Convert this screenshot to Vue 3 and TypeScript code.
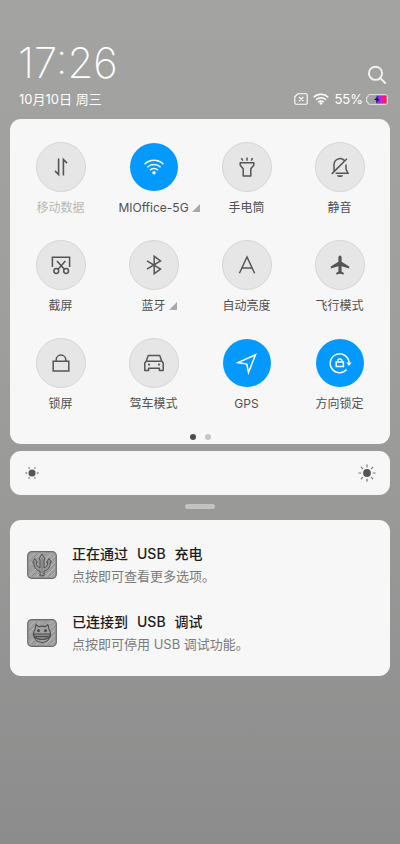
<script setup lang="ts">
import { ref } from 'vue'

type IconName =
  | 'data' | 'wifi' | 'torch' | 'mute'
  | 'shot' | 'bluetooth' | 'auto' | 'plane'
  | 'lock' | 'car' | 'gps' | 'rotate'

interface Tile {
  icon: IconName
  label: string
  on?: boolean
  dim?: boolean
  more?: boolean
}

const tiles = ref<Tile[]>([
  { icon: 'data', label: '移动数据', dim: true },
  { icon: 'wifi', label: 'MIOffice-5G', on: true, more: true },
  { icon: 'torch', label: '手电筒' },
  { icon: 'mute', label: '静音' },
  { icon: 'shot', label: '截屏' },
  { icon: 'bluetooth', label: '蓝牙', more: true },
  { icon: 'auto', label: '自动亮度' },
  { icon: 'plane', label: '飞行模式' },
  { icon: 'lock', label: '锁屏' },
  { icon: 'car', label: '驾车模式' },
  { icon: 'gps', label: 'GPS', on: true },
  { icon: 'rotate', label: '方向锁定', on: true },
])

const brightness = ref(0)

const notices = [
  { kind: 'usb', title: ['正在通过', 'USB', '充电'], text: '点按即可查看更多选项。' },
  { kind: 'debug', title: ['已连接到', 'USB', '调试'], text: '点按即可停用 USB 调试功能。' },
]

function toggle(tile: Tile) {
  tile.on = !tile.on
}
</script>

<template>
  <main class="shade">
    <header class="top">
      <div class="when">
        <time class="clock">17:26</time>
        <span class="date">10月10日 周三</span>
      </div>
      <div class="side">
        <button class="search" type="button" aria-label="搜索">
          <svg width="20" height="20" viewBox="0 0 20 20" fill="none" stroke="#f2f2f2" stroke-width="1.9" stroke-linecap="round">
            <circle cx="8.5" cy="8.3" r="6.6" />
            <path d="M13.3 13.1 18.200 18" />
          </svg>
        </button>
        <div class="status">
          <svg width="14" height="12" viewBox="0 0 14 12" fill="none" stroke="#fff" stroke-width="1.1">
            <path d="M3.8.8H12a1.2 1.2 0 0 1 1.2 1.2v8a1.2 1.2 0 0 1-1.2 1.2H2A1.2 1.2 0 0 1 .8 10V3.8zM5 4l4.4 4.2M9.4 4 5 8.2" />
          </svg>
          <svg width="16" height="12" viewBox="0 0 16 12" fill="none" stroke="#fff" stroke-width="1.5">
            <path d="M.7 4.2a10.6 10.6 0 0 1 14.6 0M3 6.7a7.4 7.4 0 0 1 10 0M5.3 9.1a4.1 4.1 0 0 1 5.4 0" />
            <path d="M6.2 10 8 11.9 9.8 10a2.8 2.8 0 0 0-3.6 0z" fill="#fff" stroke="none" />
          </svg>
          <span>55%</span>
          <svg class="battery" width="22" height="11" viewBox="0 0 22 11">
            <defs>
              <linearGradient id="charge" x1="0" x2="1" y1="0" y2="0">
                <stop offset="0" stop-color="#5a30ff" />
                <stop offset=".4" stop-color="#b02be0" />
                <stop offset=".8" stop-color="#ff1765" />
              </linearGradient>
            </defs>
            <path d="M2 3V2A1.4 1.4 0 0 1 3.4.6h16.2A1.8 1.8 0 0 1 21.4 2.400v6.200a1.800 1.800 0 0 1-1.800 1.800H3.400A1.400 1.400 0 0 1 2 9V8H.6V3z" fill="none" stroke="#e4e4e4" stroke-width="1" />
            <path d="M10.500 1.600h10v7.800h-10z" fill="url(#charge)" />
            <path d="m12 2-4 4h2.500l-.5 3.200 3.600-4.300h-2.200z" fill="#191540" />
          </svg>
        </div>
      </div>
    </header>

    <section class="card quick">
      <div class="grid">
        <button
          v-for="tile in tiles"
          :key="tile.icon"
          type="button"
          class="tile"
          :class="{ on: tile.on, dim: tile.dim }"
          @click="toggle(tile)"
        >
          <span class="disc">
            <svg width="24" height="24" viewBox="0 0 24 24" fill="none" stroke="currentColor" stroke-width="1.5" aria-hidden="true">
              <path v-if="tile.icon === 'data'" d="M9.600 3.500v16L6 15.900M14.400 20.500v-16l3.600 3.600" stroke-width="1.600" />
              <g v-else-if="tile.icon === 'wifi'">
                <path d="M2.600 9.200a13.400 13.400 0 0 1 18.800 0M5.400 12.200a9.400 9.400 0 0 1 13.200 0M8 15.100a5.700 5.700 0 0 1 8 0" />
                <circle cx="12" cy="17.800" r="1.700" fill="currentColor" stroke="none" />
              </g>
              <g v-else-if="tile.icon === 'torch'" stroke-linejoin="round">
                <path d="M5.200 7.800h13.600v2.400L15.800 13.800v7.200H8.200v-7.200L5.200 10.200zM12 2.500v3.200M6.400 3.200l1.400 2.500M17.600 3.200l-1.400 2.500" />
              </g>
              <g v-else-if="tile.icon === 'mute'">
                <path d="M16.400 5.600A6 6 0 0 0 6 9.700v6.100M18 9.500V14l2 4.200H7.600M3.800 18.900 18.900 3.800" />
                <path d="M9 20.200h6a3 1.800 0 0 1-6 0z" fill="currentColor" stroke="none" />
              </g>
              <g v-else-if="tile.icon === 'shot'">
                <path d="M3.400 14V4.200h17.200V14M8 8l7.600 8.600M16.400 8l-7.600 8.600" />
                <circle cx="7.300" cy="18" r="2.400" />
                <circle cx="17.100" cy="18" r="2.400" />
              </g>
              <path v-else-if="tile.icon === 'bluetooth'" d="m5 7.900 13.500 8.100-6.300 4.700V3.300L18.500 8 5 16.100" />
              <path v-else-if="tile.icon === 'auto'" d="M4.400 20.200 12 4l7.600 16.200M7 15h10" />
              <path
                v-else-if="tile.icon === 'plane'"
                d="M12 2.600c1.200 0 1.600 1 1.600 2.200v4L21.200 13.600v2l-7.600-2.400v5.200l2.200 1.500v1.500L12 20.800l-3.800.600v-1.500l2.200-1.500v-5.200L2.800 15.600v-2l7.600-4.800v-4c0-1.200.400-2.200 1.600-2.200z"
                fill="currentColor"
                stroke="none"
              />
              <path v-else-if="tile.icon === 'lock'" d="M4.200 10.200h15.600v9.800H4.200zM7.200 10.200V8.800a4.800 4.800 0 0 1 9.600 0v1.400" />
              <g v-else-if="tile.icon === 'car'" stroke-linejoin="round">
                <path d="M4.200 10.200 6.300 4.500h11.400l2.100 5.700zL2.800 12v7.600h3.800v-2.400h10.800v2.400h3.800V12l-1.400-1.800" />
                <circle cx="7" cy="13.600" r="1.100" fill="currentColor" stroke="none" />
                <circle cx="17" cy="13.600" r="1.100" fill="currentColor" stroke="none" />
              </g>
              <path v-else-if="tile.icon === 'gps'" d="M20.500 3.800 3 11.600l8.800 1.500 1.700 8.400z" />
              <g v-else>
                <path d="M18.600 18.600A9.400 9.400 0 1 1 21 11.500" />
                <path d="M18.400 11.400h5.200l-2.600 3.600z" fill="currentColor" stroke="none" />
                <path d="M8.200 11h7.200v4.400H8.200zM9.700 11V10a2.100 2.100 0 0 1 4.200 0v1" />
              </g>
            </svg>
          </span>
          <span class="name">
            {{ tile.label }}
            <svg v-if="tile.more" class="more" width="8" height="8" viewBox="0 0 8 8" aria-hidden="true"><path d="M8 0v8H0z" fill="#a9a9a9" /></svg>
          </span>
        </button>
      </div>
      <div class="pages"><i class="current"></i><i></i></div>
    </section>

    <label class="card bright">
      <svg width="14" height="14" viewBox="0 0 14 14" fill="none" stroke="#777" stroke-width="1.300" stroke-linecap="round" aria-hidden="true">
        <circle cx="7" cy="7" r="3.500" fill="#555" stroke="none" />
        <path d="M1 7h.6M12.400 7h.6M4 1.800l.3.500M10 1.800l-.3.500M4 12.200l.3-.5M10 12.200l-.3-.5" />
      </svg>
      <input v-model.number="brightness" type="range" min="0" max="100" aria-label="亮度" />
      <svg width="18" height="18" viewBox="0 0 18 18" fill="none" stroke="#777" stroke-width="1.200" stroke-linecap="round" aria-hidden="true">
        <circle cx="9" cy="9" r="3.900" fill="#555" stroke="none" />
        <path d="M9 .8v2M9 15.200v2M.8 9h2M15.200 9h2M3.200 3.200l1.400 1.400M13.400 13.400l1.400 1.400M3.200 14.800l1.400-1.400M13.400 4.600l1.400-1.400" />
      </svg>
    </label>

    <div class="handle"></div>

    <section class="card notices">
      <article v-for="item in notices" :key="item.kind" class="notice">
        <svg width="30" height="28" viewBox="0 0 30 28" fill="none" aria-hidden="true">
          <rect x=".7" y=".7" width="28.600" height="26.600" rx="4" fill="#a0a0a0" stroke="#6a6a6a" stroke-width="1.200" />
          <path
            d="m2 8 6-6M2 14 13 3M3 18l5-5M18 9l7-7M22 11l6-6M23 16l5-5M2 25l7-7M9 26l5-5M18 26l10-10M23 26l5-5"
            stroke="#b8b8b8"
            stroke-width="1"
          />
          <path
            d="m3 11 7-8M2 20l7-9M5 25l8-7M16 6l4-4M20 14l8-7M20 21l8-8M14 26l6-6M21 26l6-5"
            stroke="#8a8a8a"
            stroke-width=".8"
          />
          <g v-if="item.kind === 'usb'" stroke="#505050" stroke-width="1" stroke-linejoin="round">
            <path d="M15 3 11.800 8l1.200.6V17C10.300 16 9.200 14 9.200 11.400h1.200L8 7.500 5.600 11.400h1.200c0 5 2.200 7.800 6.200 8.600v4.800h4V20c4-.8 6.200-3.600 6.200-8.600h1.200L22 7.500l-2.400 3.900h1.200c0 2.600-1.100 4.600-3.800 5.600V8.600l1.200-.6z" fill="#989898" />
            <path d="M15 7v15" stroke="#777" stroke-width=".8" />
          </g>
          <g v-else stroke="#4c4c4c" stroke-width="1.100" stroke-linejoin="round">
            <path d="M8 10.500 9 5.500l2.600 2.200Q15 6.500 18.400 7.700L21 5.500l1 5c3.500 5 .200 13-7 13S4.500 15.500 8 10.500z" fill="#a0a0a0" />
            <path d="M6.800 15h16.400c.2 3.500-3.200 5.500-8.200 5.500s-8.400-2-8.200-5.500z" fill="#8a8a8a" />
            <path d="M8.500 17.600h13" />
            <circle cx="11.500" cy="11.800" r=".9" fill="#484848" />
            <circle cx="18.500" cy="11.800" r=".9" fill="#484848" />
          </g>
        </svg>
        <div>
          <h2><span v-for="part in item.title" :key="part">{{ part }}</span></h2>
          <p>{{ item.text }}</p>
        </div>
      </article>
    </section>
  </main>
</template>

<style>
body {
  margin: 0;
}
</style>

<style scoped>
.shade {
  box-sizing: border-box;
  min-height: 100vh;
  padding: 36px 10px 20px;
  display: flex;
  flex-direction: column;
  background: linear-gradient(180deg, #a3a3a2 0%, #9f9f9d 35%, #989897 65%, #8c8c8c 100%);
  font-family: Inter, "Noto Sans CJK SC", sans-serif;
  color: #505050;
}

button {
  padding: 0;
  border: 0;
  background: none;
  font: inherit;
  color: inherit;
}

svg {
  display: block;
  flex: none;
}

.top {
  display: flex;
  justify-content: space-between;
  align-items: flex-end;
  padding: 0 2px 11px 8px;
  color: #fff;
}

.when,
.side {
  display: flex;
  flex-direction: column;
}

.clock {
  font-weight: 200;
  font-size: 42px;
  line-height: 54px;
}

.date {
  padding-left: 1px;
  font-size: 13px;
  line-height: 18px;
}

.side {
  align-items: flex-end;
  gap: 5px;
}

.search {
  margin-right: 1px;
}

.status {
  display: flex;
  align-items: center;
  gap: 5px;
  font-size: 13px;
  line-height: 18px;
}

.battery {
  margin-left: -2px;
}

.card {
  border-radius: 11px;
  background: #f7f7f7;
}

.quick {
  padding: 23px 4px 4px;
}

.grid {
  display: grid;
  grid-template-columns: repeat(4, 1fr);
  row-gap: 23px;
}

.tile {
  display: flex;
  flex-direction: column;
  align-items: center;
  gap: 7px;
}

.disc {
  box-sizing: border-box;
  width: 50px;
  height: 50px;
  display: grid;
  place-items: center;
  border: 1px solid #d6d6d6;
  border-radius: 50%;
  background: #e6e6e6;
  color: #555;
}

.on .disc {
  border-color: transparent;
  background: #0499ff;
  background-clip: padding-box;
  color: #fff;
}

.name {
  position: relative;
  font-size: 12px;
  line-height: 18px;
  white-space: nowrap;
}

.more {
  position: absolute;
  left: calc(100% + 3px);
  top: 5px;
}

.dim .name {
  color: #b8b8b8;
}

.pages {
  display: flex;
  justify-content: center;
  gap: 9px;
  padding-top: 21px;
}

.pages i {
  width: 6px;
  height: 6px;
  border-radius: 50%;
  background: #c6c6c6;
}

.pages .current {
  background: #4c4c4c;
}

.bright {
  display: flex;
  align-items: center;
  gap: 12px;
  height: 44px;
  margin-top: 7px;
  padding: 0 14px 0 15px;
}

.bright input {
  flex: 1;
  min-width: 0;
  margin: 0;
  appearance: none;
  background: transparent;
}

.bright input::-webkit-slider-thumb {
  appearance: none;
  width: 20px;
  height: 20px;
  background: transparent;
}

.handle {
  align-self: center;
  width: 30px;
  height: 5px;
  margin: 9px 0 11px;
  border-radius: 3px;
  background: #c2c2c2;
}

.notices {
  display: flex;
  flex-direction: column;
  gap: 24px;
  padding: 23px 17px 21px;
}

.notice {
  display: flex;
  align-items: center;
  gap: 15px;
}

h2,
p {
  margin: 0;
  line-height: 22px;
}

h2 {
  display: flex;
  gap: 9px;
  color: #1c1c1c;
  font-size: 14px;
  font-weight: 500;
}

p {
  color: #7b7b7b;
  font-size: 13px;
}
</style>
